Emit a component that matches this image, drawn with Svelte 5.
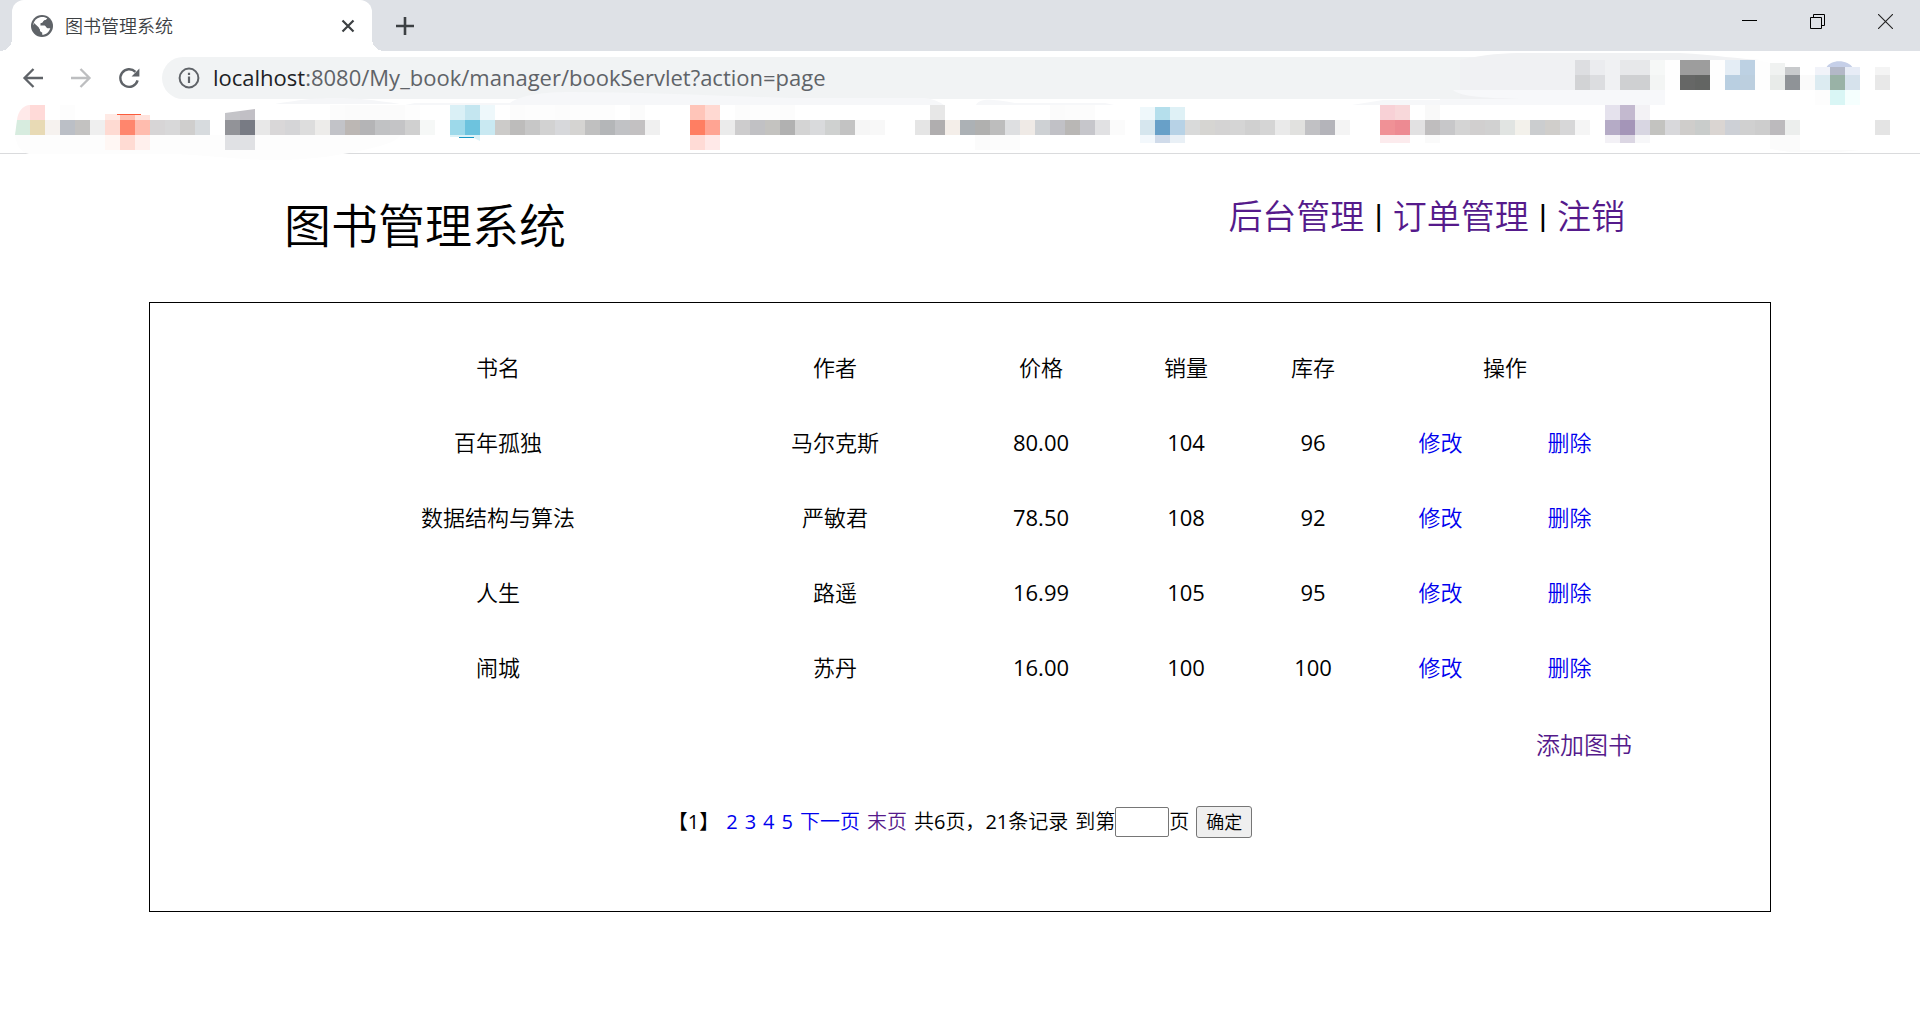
<script lang="ts">
	type Book = { name: string; author: string; price: string; sales: number; stock: number };
	type Tile = { x: number; y: number; h: number; fill: string };

	const books: Book[] = [
		{ name: '百年孤独', author: '马尔克斯', price: '80.00', sales: 104, stock: 96 },
		{ name: '数据结构与算法', author: '严敏君', price: '78.50', sales: 108, stock: 92 },
		{ name: '人生', author: '路遥', price: '16.99', sales: 105, stock: 95 },
		{ name: '闹城', author: '苏丹', price: '16.00', sales: 100, stock: 100 }
	];
	const pages = [2, 3, 4, 5];

	let pageNo = '';

	// every tile is 15px wide, '-' leaves a gap
	function strip(start: number, y: number, h: number, colors: string): Tile[] {
		return colors
			.split(' ')
			.map((c, i) => ({ x: (start + i) * 15, y, h, fill: '#' + c }))
			.filter((t) => t.fill !== '#-');
	}

	const bookmarkTiles: Tile[] = [
		...strip(2, 3, 15, 'ffdad8 - fdfdfd'),
		...strip(7, 12, 6, 'ffeae5'),
		...strip(8, 13, 5, 'ffc0b1 ffe3dd'),
		...strip(22, 3, 15, 'fcfcfc fbfbfb fbfbfb fbfbfb fbfbfb fdfdfd'),
		...strip(30, 3, 15, 'daf0f6 c4e6f0 eef8fb - fcfcfc fdfdfd fdfdfd fcfcfc fdfdfd fdfdfd fdfdfd - fbfbfb'),
		...strip(46, 3, 15, 'ffc5b9 ffd9d2 - fcfcfc fdfdfd fdfdfd fcfcfc'),
		...strip(62, 3, 15, 'e7e7e7'),
		...strip(70, 3, 15, 'fbfbfb fcfcfc fcfcfc'),
		...strip(76, 5, 13, 'eff8fb b5dfec dff1f6'),
		...strip(92, 3, 15, 'f8d1d6 f8d8da - f9f9f9'),
		...strip(107, 3, 15, 'e5e2ed c3b9cf f3f2f5'),
		...strip(2, 18, 15, 'e8dab5 f6f2ef bbbfc6 c3c2c1 efefef fedad2 ff866d ffbcae d7d5d6 d8d8d9 cfcecd d7dbde'),
		...strip(15, 18, 15, '929398 787b84 e8e8e8 d9d7d8 d5d5d7 dddddd edecea c2c3c8 bcb7b4 b4b4b6 c1c2c4 c4c4c6 d0d0d0 f6f8f7'),
		...strip(30, 18, 15, '9dd9ea 6dc3de c9e9f2 cccbc9 bdbcbb c7c7c7 d2d2d2 d7d8db d5d4d2 c0c0c0 b4b6b8 c1c2c5 c3c1c2 f0f0f0'),
		...strip(46, 18, 15, 'ff7e62 ffa493 ebebeb cdcccd c1c1c4 c4c3c0 b1b1b1 d4d4d4 d9dadc cfd1d0 c3c3c3 f6f6f6 f8f8f8'),
		...strip(61, 18, 15, 'e5e5e5 b0aeaf f4eee9 acb1b5 b0b0af bdbdbd dedfe1 efeae6 ced1d4 c1c1c6 b9b7b5 c6c6cb e1e1e3 fbfbfb'),
		...strip(76, 18, 15, 'd6e6ee 68a0c8 b7d2e6 d9dada d6d5d2 d4d3d3 d5d5d5 d0d0d0 d5d5d5 eaeaea e1e1df c1c1c4 b4b4ba f4f4f4'),
		...strip(92, 18, 15, 'f09196 ed8a92 e2e1e2 bfbdbe c7c7c9 d4d4d4 d1cfcf d1d1d1 e1e4e2 f3f1eb cbcdcf d0cecb d7d7d8 f5f5f5'),
		...strip(107, 18, 15, 'b5abc6 a495b8 d8d6e2 c3c3c0 d8d8db cfcdcb c9cccb dad5d2 cdd0d6 d0d0d0 cdcdcd bcbabd eceeed'),
		...strip(125, 18, 15, 'e4e4e4'),
		...strip(7, 33, 15, 'fff7f4 ffdbd3 fff0ed'),
		...strip(15, 33, 15, 'e0e1e4 e0e1e4'),
		...strip(46, 33, 15, 'ffdbd6 ffe9e8'),
		...strip(65, 33, 15, 'fbfbfb fcfcfc fcfcfc'),
		...strip(76, 33, 8, 'f3f8fc d0dbea e9f0f6'),
		...strip(92, 33, 8, 'fcebed fcebed - fafafa'),
		...strip(107, 33, 8, 'f3f1f6 dbd6e3 f7f7f9')
	];

	// extension icons, counted from the left edge of their own box
	const extensionTiles: Tile[] = [
		...strip(9, 9, 15, 'dddee1 ebecef - e7e8ea e7e8ea f6f8f7 - 9d9d9d 9d9d9d - e4edf5 bdd1e3'),
		...strip(22, 12, 12, 'f0f2f1'),
		...strip(23, 16, 8, 'c8cacc'),
		...strip(25, 16, 8, 'f1f3f9 b3b8c7 e7ecf6 - f4f4f4'),
		...strip(9, 24, 15, 'd2d3d5 dcdde0 - cfd0d2 cfd0d2 f3f5f4 - 666766 636563 - b9cfe1 bccfdf - e8ebe9 8f9397 fafafa dcebf1 99b2a6 d6e2ec - e8e8e8'),
		...strip(25, 39, 15, 'fdfdfd d9f6f5 f5fffe')
	];
</script>

<header class="chrome">
	<div class="tab-strip">
		<div class="tab">
			<svg class="globe" viewBox="0 0 22 22" width="22" height="22" aria-hidden="true">
				<circle cx="11" cy="11" r="11" fill="#5f6368" />
				<path d="M9 2.3 C12 1.6 15 2.4 16.3 3.6 C15.6 5.4 13.8 5.2 12.6 6 C12 7.4 11 8 9.6 8.1 L9.4 10.4 L13.6 10.6 C15 11 14.8 12.8 16.4 13.2 L19.3 13.2 C18.2 17 15 19.6 11.2 19.8 L11.2 17.6 C9.6 17.4 8.6 16.2 8.8 14.6 C6.8 13.6 4 11.4 2.2 9.4 C2.9 6 5.4 3.2 9 2.3 Z" fill="#fff" />
				<path d="M3 8 L7.6 12.2 L8.8 14.6 L8.8 16.2 L10.6 17.6 L10.6 19.8 C5.6 19.6 2.2 15.6 2.2 11 Z" fill="#5f6368" />
				<path d="M12.6 6 C13.6 5 15.8 5.4 16.3 3.6 C18.6 5.4 20 8.4 19.8 11.6 L17 11.8 C15.6 11.4 15.4 9.4 13.4 9.2 L11.4 9 Z" fill="#5f6368" />
			</svg>
			<span class="tab-title">图书管理系统</span>
			<button class="icon-btn" aria-label="关闭标签页">
				<svg viewBox="0 0 14 14" width="14" height="14"><path d="M1.5 1.5 L12.5 12.5 M12.5 1.5 L1.5 12.5" stroke="#3c4043" stroke-width="2.2" /></svg>
			</button>
		</div>
		<button class="icon-btn new-tab" aria-label="新标签页">
			<svg viewBox="0 0 18 18" width="18" height="18"><path d="M9 0 V18 M0 9 H18" stroke="#3c4043" stroke-width="2.6" /></svg>
		</button>
		<div class="window-btns">
			<button class="icon-btn" aria-label="最小化">
				<svg viewBox="0 0 15 15" width="15" height="15"><path d="M0 6.5 H15" stroke="#000" /></svg>
			</button>
			<button class="icon-btn" aria-label="还原">
				<svg viewBox="0 0 15 15" width="15" height="15" fill="none" stroke="#000"><path d="M.5 3.5 H11.5 V14.5 H.5 Z M3.5 3.5 V.5 H14.5 V11.5 H11.5" /></svg>
			</button>
			<button class="icon-btn" aria-label="关闭">
				<svg viewBox="0 0 15 15" width="15" height="15"><path d="M0 0 L15 15 M15 0 L0 15" stroke="#222" stroke-width="1.1" /></svg>
			</button>
		</div>
	</div>

	<div class="toolbar">
		<button class="icon-btn" aria-label="后退">
			<svg viewBox="0 0 26 26" width="26" height="26" fill="none" stroke="#5f6368" stroke-width="2.3"><path d="M23 13 H5 M13.5 4 L4.5 13 L13.5 22" /></svg>
		</button>
		<button class="icon-btn" aria-label="前进" disabled>
			<svg viewBox="0 0 26 26" width="26" height="26" fill="none" stroke="#bdbec0" stroke-width="2.3"><path d="M3 13 H21 M12.5 4 L21.5 13 L12.5 22" /></svg>
		</button>
		<button class="icon-btn" aria-label="重新加载">
			<svg viewBox="0 0 26 26" width="26" height="26"><path d="M21.6 15.4 A8.8 8.8 0 1 1 19.4 6.9" fill="none" stroke="#5f6368" stroke-width="2.4" /><path d="M23.4 3.6 V11.4 H15.6 Z" fill="#5f6368" /></svg>
		</button>
		<div class="omnibox">
			<svg viewBox="0 0 22 22" width="22" height="22" aria-hidden="true"><circle cx="11" cy="11" r="9.4" fill="none" stroke="#5f6368" stroke-width="2" /><path d="M11 9.6 V16 M11 5.8 V8" stroke="#5f6368" stroke-width="2.2" /></svg>
			<span class="url"><b>localhost</b>:8080/My_book/manager/bookServlet?action=page</span>
		</div>
		<svg class="extensions" viewBox="0 0 480 54" width="480" height="54" aria-hidden="true">
			<path d="M20 9 C50 2 70 2 100 2 H240 C275 4 300 8 320 9 H225 V48 H210 L20 48 Z" fill="#f0f1f3" />
			<path d="M13 39 H225 V54 H0 V48 H80 C50 47 20 46 13 39 Z" fill="#f7f8fa" />
			<path d="M225 9 H315 L330 12 V39 H225 Z" fill="#fefefe" />
			<path d="M386 17 C390 8 408 8 413 17 Z" fill="#c5cfe8" />
			{#each extensionTiles as t}
				<rect x={t.x} y={t.y} width="15" height={t.h} fill={t.fill} />
			{/each}
		</svg>
	</div>

	<svg class="bookmarks" viewBox="0 0 1920 51" width="1920" height="51" aria-hidden="true">
		<path d="M275 2 C320 -6 350 -6 400 2 Z" fill="#f5f6f8" />
		<path d="M405 3 L415 1 H510 C520 -7 545 -10 570 -10 C640 -10 720 -6 790 -4 H925 C938 -2 942 2 944 3 Z" fill="#f6f7f9" />
		<path d="M976 3 C980 -4 990 -3 1015 1 H1105 L1114 3 Z" fill="#f6f7f9" />
		<path d="M1352 3 L1383 -2 H1480 V3 Z" fill="#f6f7f9" />
		<path d="M29 52 C20 50 16 42 15 33 H400 C400 42 350 51 343 52 C320 56 300 58 270 58 C235 58 200 52 170 52 Z" fill="#fdfdfd" />
		<path d="M1770 33 H1800 V48 H1860 L1840 50 H1790 L1770 47 Z" fill="#fbfbfb" />
		<path d="M15 33 L17 18 H30 V33 Z" fill="#d7ecdf" />
		<path d="M17 18 C18 9 23 4 29 3 H30 V18 Z" fill="#ffe9e9" />
		<path d="M225 11 L240 9 V18 H225 Z" fill="#c4c4c8" />
		<path d="M240 9 L255 7 V18 H240 Z" fill="#c1bfc5" />
		<path d="M450 33 H480 V39 L472 35 H450 Z" fill="#dcf2f7" />
		{#each bookmarkTiles as t}
			<rect x={t.x} y={t.y} width="15" height={t.h} fill={t.fill} />
		{/each}
		<path d="M117 12.5 H141" stroke="#fb5c3c" />
		<path d="M459 35.5 H474" stroke="#1797c4" />
	</svg>
</header>

<div class="page-head">
	<h1>图书管理系统</h1>
	<nav>
		<a href="#manager">后台管理</a>
		<span class="bar">|</span>
		<a href="#orders">订单管理</a>
		<span class="bar">|</span>
		<a href="#logout">注销</a>
	</nav>
</div>

<main>
	<table>
		<colgroup>
			<col class="name" />
			<col class="author" />
			<col class="price" />
			<col class="sales" />
			<col class="stock" />
			<col class="action" />
			<col class="action" />
		</colgroup>
		<thead>
			<tr>
				<th>书名</th>
				<th>作者</th>
				<th>价格</th>
				<th>销量</th>
				<th>库存</th>
				<th colspan="2">操作</th>
			</tr>
		</thead>
		<tbody>
			{#each books as book}
				<tr>
					<td>{book.name}</td>
					<td>{book.author}</td>
					<td class="num">{book.price}</td>
					<td class="num">{book.sales}</td>
					<td class="num">{book.stock}</td>
					<td><a href="#edit">修改</a></td>
					<td><a href="#delete">删除</a></td>
				</tr>
			{/each}
		</tbody>
	</table>

	<div class="add-row"><a href="#add">添加图书</a></div>

	<form class="pager" on:submit|preventDefault>
		<span class="num">【1】</span>
		{#each pages as p}
			<a class="num" href="#page{p}">{p}</a>
		{/each}
		<a href="#next">下一页</a>
		<a class="visited" href="#last">末页</a>
		<span>共<span class="num">6</span>页，<span class="num">21</span>条记录</span>
		<label>到第<input type="text" bind:value={pageNo} />页</label>
		<button type="submit">确定</button>
	</form>
</main>

<style>
	:global(body) {
		margin: 0;
		background: #fff;
		color: #000;
		font-family: 'Open Sans', 'Noto Sans CJK SC', sans-serif;
		font-weight: 350;
	}
	a {
		color: #0000ee;
		text-decoration: none;
	}

	/* browser frame */
	.chrome {
		border-bottom: 1px solid #dadbdd;
		overflow-x: clip;
	}
	.icon-btn {
		display: flex;
		padding: 0;
		border: none;
		background: none;
	}
	.tab-strip {
		display: flex;
		height: 51px;
		padding-left: 12px;
		background: #dee1e6;
	}
	.tab {
		position: relative;
		display: flex;
		align-items: center;
		box-sizing: border-box;
		width: 360px;
		padding: 0 17px 0 19px;
		border-radius: 12px 12px 0 0;
		background: #fff;
	}
	/* the outward curves at the foot of the tab */
	.tab::before,
	.tab::after {
		content: '';
		position: absolute;
		bottom: 0;
		width: 12px;
		height: 12px;
	}
	.tab::before {
		left: -12px;
		background: radial-gradient(circle at 0 0, #dee1e6 12px, #fff 12px);
	}
	.tab::after {
		right: -12px;
		background: radial-gradient(circle at 100% 0, #dee1e6 12px, #fff 12px);
	}
	.globe {
		margin-right: 12px;
	}
	.tab-title {
		flex: 1;
		color: #3c4043;
		font-size: 18px;
		line-height: 24px;
	}
	.new-tab {
		align-items: center;
		margin-left: 24px;
	}
	.window-btns {
		display: flex;
		gap: 53px;
		margin-left: auto;
		padding: 14px 27px 0 0;
	}
	.toolbar {
		position: relative;
		display: flex;
		align-items: center;
		gap: 22px;
		box-sizing: border-box;
		height: 51px;
		padding: 2px 270px 0 20px;
	}
	.omnibox {
		display: flex;
		flex: 1;
		align-items: center;
		gap: 13px;
		height: 42px;
		margin-left: -2px;
		padding-left: 16px;
		border-radius: 21px;
		background: #f1f3f4;
	}
	.url {
		padding-bottom: 2px;
		color: #5f6368;
		font-size: 22px;
		font-weight: normal;
		line-height: 40px;
		white-space: nowrap;
	}
	.url b {
		color: #202124;
		font-weight: normal;
	}
	.extensions {
		position: absolute;
		top: 0;
		right: 0;
	}
	.bookmarks {
		position: relative;
		display: block;
		overflow: visible;
	}

	/* page */
	.page-head {
		display: flex;
		justify-content: space-between;
		height: 148px;
		padding: 0 295px 0 284px;
	}
	h1 {
		margin: 35px 0 0;
		font-size: 47px;
		font-weight: inherit;
		line-height: 72px;
	}
	nav {
		display: flex;
		gap: 10px;
		margin-top: 36px;
		font-size: 34px;
		line-height: 52px;
	}
	nav a,
	.add-row a,
	.visited {
		color: #551a8b;
	}
	.bar {
		font-family: Roboto, sans-serif;
		font-weight: normal;
	}
	main {
		margin: 0 149px;
		padding: 26px 136px 53px;
		border: 1px solid #000;
	}
	table {
		width: 100%;
		border-collapse: collapse;
		table-layout: fixed;
		font-size: 22px;
	}
	.name {
		width: 424px;
	}
	.author {
		width: 250px;
	}
	.price {
		width: 162px;
	}
	.sales {
		width: 128px;
	}
	.stock {
		width: 126px;
	}
	.action {
		width: 129px;
	}
	th,
	td {
		height: 75px;
		padding: 0;
		font-weight: inherit;
		line-height: 32px;
		text-align: center;
	}
	.num {
		font-weight: normal;
	}
	.add-row {
		padding-right: 2px;
		font-size: 24px;
		line-height: 82px;
		text-align: right;
	}
	.pager {
		display: flex;
		justify-content: center;
		align-items: center;
		gap: 7px;
		height: 72px;
		font-size: 20px;
		line-height: 28px;
		white-space: nowrap;
	}
	.pager label {
		display: flex;
		align-items: center;
	}
	.pager input {
		box-sizing: border-box;
		width: 54px;
		height: 30px;
		border: 1px solid #767676;
		border-radius: 2px;
		font-size: 18px;
	}
	.pager button {
		height: 32px;
		padding: 0 9px;
		border: 1px solid #767676;
		border-radius: 3px;
		background: #efefef;
		color: #000;
		font-family: inherit;
		font-size: 18px;
		font-weight: inherit;
		line-height: 28px;
	}
</style>
